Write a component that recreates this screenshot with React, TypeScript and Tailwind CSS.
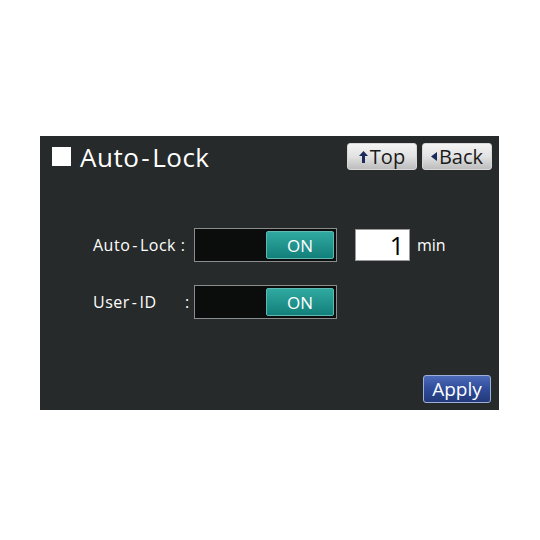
import React from 'react';

const font = { fontFamily: '"Open Sans", "Noto Sans", sans-serif' };

const Hyphen: React.FC = () => <span className="mx-[2px]">-</span>;

const Toggle: React.FC = () => (
  <div className="w-[143px] h-[34px] border border-[#8a8d8d] bg-[#0b0c0c] flex justify-end items-center pr-[2px]">
    <div className="w-[68px] h-[28px] rounded-[2px] border border-[#5fb9b2] bg-gradient-to-b from-[#2fa9a1] to-[#12807a] text-white text-[17px] leading-none flex items-center justify-center">
      ON
    </div>
  </div>
);

const NavButton: React.FC<{ arrow: React.ReactNode; label: string }> = ({ arrow, label }) => (
  <div className="w-[70px] h-[27px] rounded-[3px] bg-gradient-to-b from-[#f4f4f4] via-[#e2e2e2] to-[#bdbdbd] border border-[#d8d8d8] flex items-center justify-center gap-[2px] text-[#1a1a1a] text-[20px] leading-none">
    {arrow}
    <span>{label}</span>
  </div>
);

export default function App() {
  return (
    <div className="w-[540px] h-[540px] bg-white pt-[136px] pl-[40px]" style={font}>
      <div className="w-[459px] h-[274px] bg-[#262a2a] flex flex-col pt-[7px] pb-[7px]">
        <div className="flex items-center justify-between pl-[12px] pr-[7px]">
          <div className="flex items-center gap-[9px] text-white">
            <div className="w-[19px] h-[19px] bg-white" />
            <span className="text-[26px] leading-none tracking-[0.5px]">
              Auto<Hyphen />Lock
            </span>
          </div>
          <div className="flex gap-[5px]">
            <NavButton
              arrow={
                <svg width="9" height="12" viewBox="0 0 9 12">
                  <path d="M4.5 0 L9 5 L6 5 L6 12 L3 12 L3 5 L0 5 Z" fill="#1a2a5a" />
                </svg>
              }
              label="Top"
            />
            <NavButton
              arrow={
                <svg width="6" height="9" viewBox="0 0 6 9">
                  <path d="M6 0 L0 4.5 L6 9 Z" fill="#1a2a5a" />
                </svg>
              }
              label="Back"
            />
          </div>
        </div>

        <div className="flex flex-col gap-[23px] mt-[58px] pl-[53px] text-white text-[16px]">
          <div className="flex items-center">
            <span className="w-[101px] tracking-[0.5px]">
              Auto<Hyphen />Lock :
            </span>
            <Toggle />
            <div className="ml-[18px] w-[55px] h-[32px] bg-white border border-[#999] flex items-center justify-end pr-[5px] text-black text-[25px] leading-none">
              1
            </div>
            <span className="ml-[7px] text-[16px]">min</span>
          </div>
          <div className="flex items-center">
            <span className="w-[101px] flex tracking-[0.5px]">
              <span className="w-[92px]">
                User<Hyphen />ID
              </span>
              <span>:</span>
            </span>
            <Toggle />
          </div>
        </div>

        <div className="mt-auto flex justify-end pr-[8px]">
          <div className="w-[68px] h-[28px] rounded-[3px] border border-[#9fb0d8] bg-gradient-to-b from-[#4c6ab8] via-[#2f4c9a] to-[#233a7a] text-white text-[19px] leading-none flex items-center justify-center">
            Apply
          </div>
        </div>
      </div>
    </div>
  );
}
